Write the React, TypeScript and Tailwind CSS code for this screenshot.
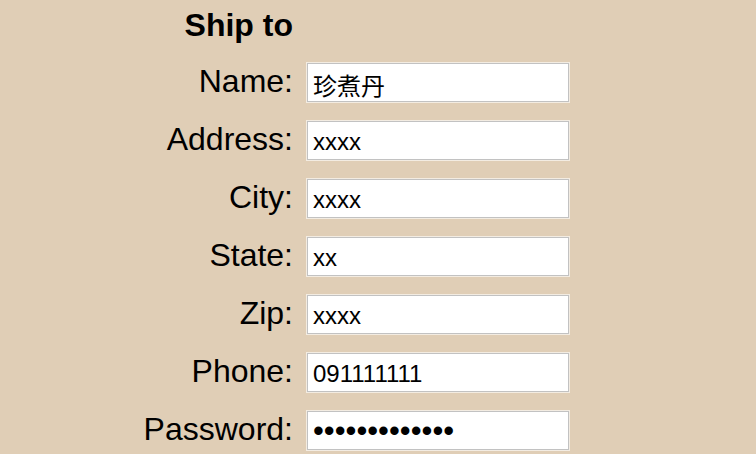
const FIELDS = [
  { label: 'Name:', value: '珍煮丹', type: 'text' },
  { label: 'Address:', value: 'xxxx', type: 'text' },
  { label: 'City:', value: 'xxxx', type: 'text' },
  { label: 'State:', value: 'xx', type: 'text' },
  { label: 'Zip:', value: 'xxxx', type: 'text' },
  { label: 'Phone:', value: '091111111', type: 'text' },
  { label: 'Password:', value: 'abcdefghijklm', type: 'password' },
];

export default function App() {
  return (
    <div
      className="min-h-screen w-full bg-[#e0ceb6] text-black overflow-hidden"
      style={{ fontFamily: '"Liberation Sans", Arial, "Noto Sans CJK SC", sans-serif' }}
    >
      <div className="grid grid-cols-[293px_264px] gap-x-[13px] gap-y-[17px] pt-[5px]">
        {/* Heading */}
        <div className="text-right text-[32px] font-bold leading-[40px]">Ship to</div>
        <div />

        {FIELDS.map((f) => (
          <div key={f.label} className="contents">
            <label className="text-right text-[32px] leading-[38px] h-[41px]">{f.label}</label>
            <div className="h-[41px] flex items-center">
              <input
                type={f.type}
                defaultValue={f.value}
                readOnly
                className={
                  f.type === 'password'
                    ? 'w-[262px] h-[39px] mx-px bg-white border border-[#c2c2c2] shadow-[0_0_0_1px_#f3ece2] pl-[5px] pt-[2px] text-[31px] text-black outline-none'
                    : 'w-[262px] h-[39px] mx-px bg-white border border-[#c2c2c2] shadow-[0_0_0_1px_#f3ece2] pl-[5px] pt-[3px] text-[24px] text-black outline-none'
                }
                style={{ fontFamily: '"Liberation Sans", Arial, "Noto Sans CJK SC", sans-serif' }}
              />
            </div>
          </div>
        ))}
      </div>
    </div>
  );
}
